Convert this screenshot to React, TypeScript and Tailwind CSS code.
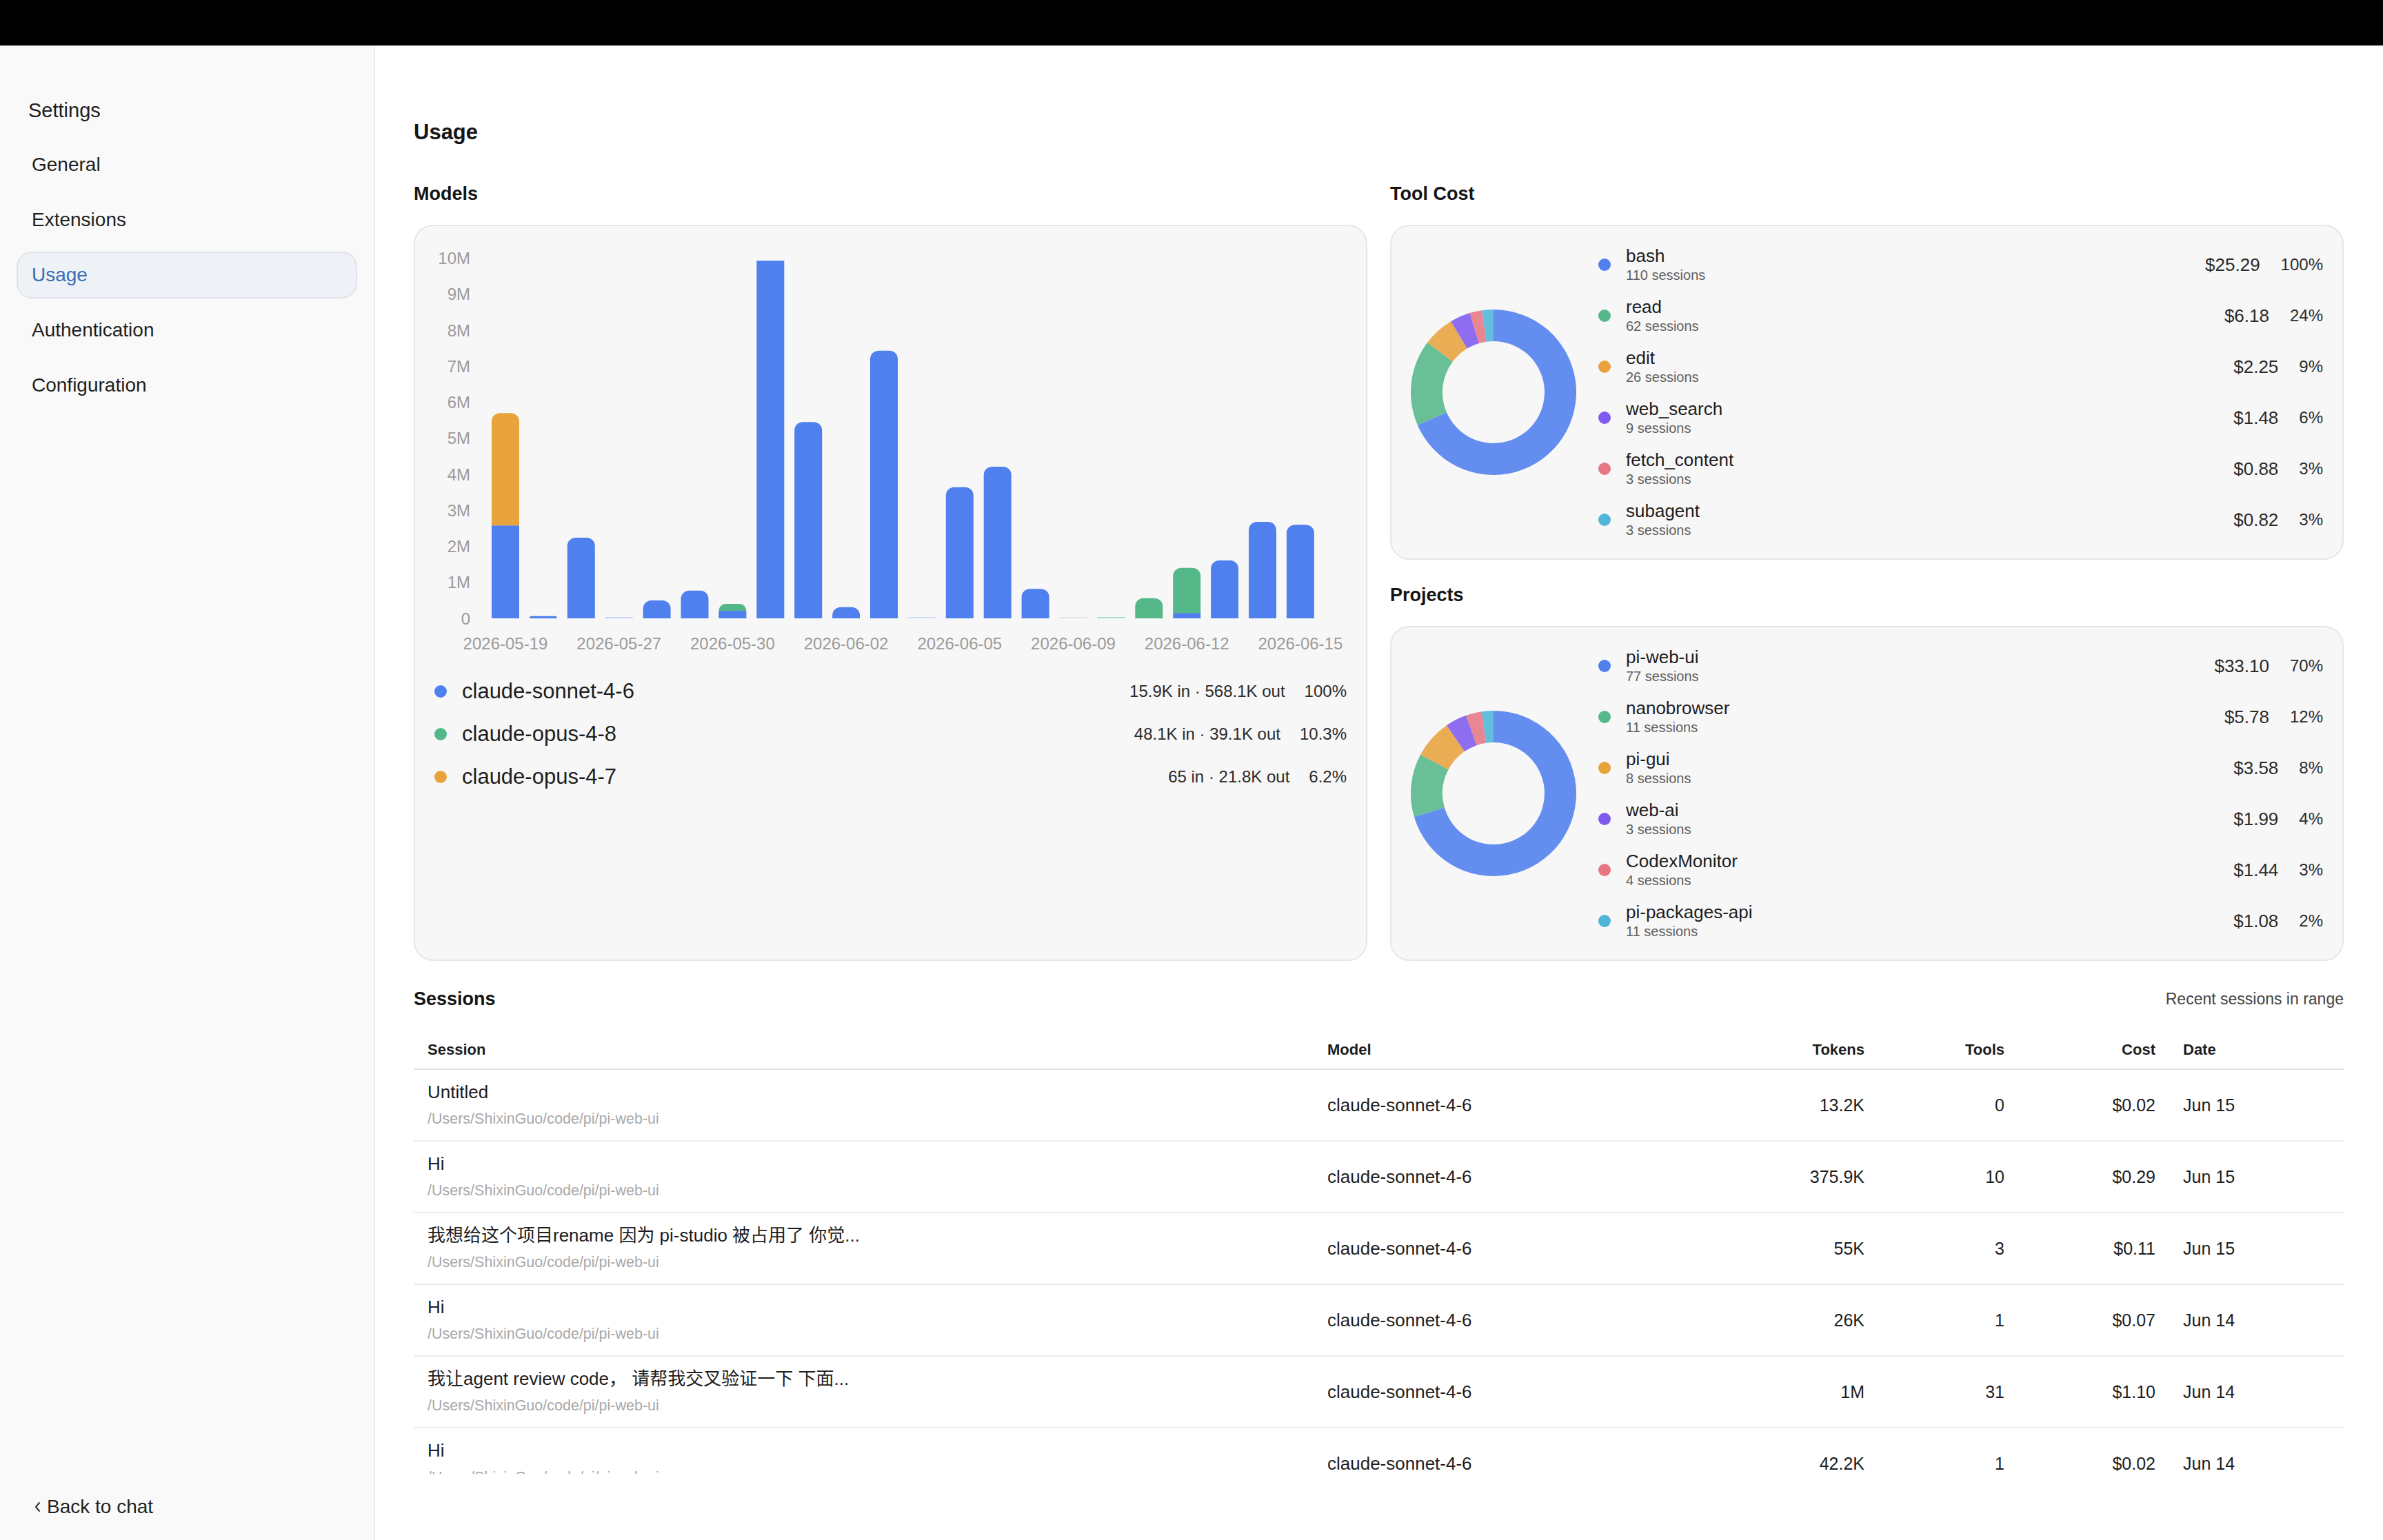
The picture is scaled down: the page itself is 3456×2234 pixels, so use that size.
import type { ReactNode } from 'react';

const BLUE = '#4f80ee';
const GREEN = '#55b889';
const ORANGE = '#e8a33c';

const navItems = ['General', 'Extensions', 'Usage', 'Authentication', 'Configuration'];

// [blue, green, orange] in millions of tokens, per day
const days: { v: [number, number, number]; flat?: boolean; faint?: string }[] = [
  { v: [2.58, 0, 3.12] },
  { v: [0.06, 0, 0] },
  { v: [2.24, 0, 0] },
  { v: [0, 0, 0], faint: '#c8d5f6' },
  { v: [0.5, 0, 0] },
  { v: [0.77, 0, 0] },
  { v: [0.21, 0.19, 0] },
  { v: [9.93, 0, 0], flat: true },
  { v: [5.45, 0, 0] },
  { v: [0.31, 0, 0] },
  { v: [7.43, 0, 0] },
  { v: [0, 0, 0], faint: '#d4dcf3' },
  { v: [3.64, 0, 0] },
  { v: [4.21, 0, 0] },
  { v: [0.82, 0, 0] },
  { v: [0, 0, 0], faint: '#e2e2e2' },
  { v: [0, 0, 0], faint: '#a8dbc1' },
  { v: [0, 0.56, 0] },
  { v: [0.15, 1.25, 0] },
  { v: [1.61, 0, 0] },
  { v: [2.68, 0, 0] },
  { v: [2.6, 0, 0] },
];

const dateLabels = ['2026-05-19', '2026-05-27', '2026-05-30', '2026-06-02', '2026-06-05', '2026-06-09', '2026-06-12', '2026-06-15'];

const models = [
  { name: 'claude-sonnet-4-6', io: '15.9K in · 568.1K out', pct: '100%', dot: 'bg-[#4f80ee]' },
  { name: 'claude-opus-4-8', io: '48.1K in · 39.1K out', pct: '10.3%', dot: 'bg-[#55b889]' },
  { name: 'claude-opus-4-7', io: '65 in · 21.8K out', pct: '6.2%', dot: 'bg-[#e8a33c]' },
];

const palette = [
  { fill: '#4f80ee', dot: 'bg-[#4f80ee]' },
  { fill: '#55b889', dot: 'bg-[#55b889]' },
  { fill: '#e8a33c', dot: 'bg-[#e8a33c]' },
  { fill: '#7f5aef', dot: 'bg-[#7f5aef]' },
  { fill: '#e67683', dot: 'bg-[#e67683]' },
  { fill: '#50b5d8', dot: 'bg-[#50b5d8]' },
];

type Slice = { name: string; sessions: string; cost: number; pct: string };

const tools: Slice[] = [
  { name: 'bash', sessions: '110 sessions', cost: 25.29, pct: '100%' },
  { name: 'read', sessions: '62 sessions', cost: 6.18, pct: '24%' },
  { name: 'edit', sessions: '26 sessions', cost: 2.25, pct: '9%' },
  { name: 'web_search', sessions: '9 sessions', cost: 1.48, pct: '6%' },
  { name: 'fetch_content', sessions: '3 sessions', cost: 0.88, pct: '3%' },
  { name: 'subagent', sessions: '3 sessions', cost: 0.82, pct: '3%' },
];

const projects: Slice[] = [
  { name: 'pi-web-ui', sessions: '77 sessions', cost: 33.1, pct: '70%' },
  { name: 'nanobrowser', sessions: '11 sessions', cost: 5.78, pct: '12%' },
  { name: 'pi-gui', sessions: '8 sessions', cost: 3.58, pct: '8%' },
  { name: 'web-ai', sessions: '3 sessions', cost: 1.99, pct: '4%' },
  { name: 'CodexMonitor', sessions: '4 sessions', cost: 1.44, pct: '3%' },
  { name: 'pi-packages-api', sessions: '11 sessions', cost: 1.08, pct: '2%' },
];

const sessions = [
  { title: 'Untitled', tokens: '13.2K', tools: '0', cost: '$0.02', date: 'Jun 15' },
  { title: 'Hi', tokens: '375.9K', tools: '10', cost: '$0.29', date: 'Jun 15' },
  { title: '我想给这个项目rename 因为 pi-studio 被占用了 你觉...', tokens: '55K', tools: '3', cost: '$0.11', date: 'Jun 15' },
  { title: 'Hi', tokens: '26K', tools: '1', cost: '$0.07', date: 'Jun 14' },
  { title: '我让agent review code， 请帮我交叉验证一下 下面...', tokens: '1M', tools: '31', cost: '$1.10', date: 'Jun 14' },
  { title: 'Hi', tokens: '42.2K', tools: '1', cost: '$0.02', date: 'Jun 14' },
];

const PATH = '/Users/ShixinGuo/code/pi/pi-web-ui';
const COLS = 'grid grid-cols-[1305px_565px_254px_203px_219px_1fr]';

function topRounded(x: number, y: number, w: number, h: number, r: number) {
  const rr = Math.min(r, h, w / 2);
  return `M${x} ${y + h} L${x} ${y + rr} A${rr} ${rr} 0 0 1 ${x + rr} ${y} L${x + w - rr} ${y} A${rr} ${rr} 0 0 1 ${x + w} ${y + rr} L${x + w} ${y + h} Z`;
}

function BarChart() {
  const base = 569;
  const perM = 52.25;
  const barW = 40;
  const left = (i: number) => 111 + i * 54.9;

  return (
    <svg width="1379" height="644" className="block">
      {Array.from({ length: 11 }).map((_, i) => (
        <text
          key={i}
          x={80}
          y={base - i * perM}
          textAnchor="end"
          dominantBaseline="central"
          fontSize="24"
          fill="#9b9b9b"
        >
          {i === 0 ? '0' : `${i}M`}
        </text>
      ))}

      {days.map((d, i) => {
        const x = left(i);
        if (d.faint) {
          return <rect key={i} x={x} y={base - 2} width={barW} height={2} fill={d.faint} />;
        }
        const segs = [
          { h: d.v[0] * perM, c: BLUE },
          { h: d.v[1] * perM, c: GREEN },
          { h: d.v[2] * perM, c: ORANGE },
        ].filter((s) => s.h > 0);
        let y = base;
        return (
          <g key={i}>
            {segs.map((s, j) => {
              y -= s.h;
              const last = j === segs.length - 1;
              if (!last || d.flat) {
                return <rect key={j} x={x} y={y} width={barW} height={s.h} fill={s.c} />;
              }
              return <path key={j} d={topRounded(x, y, barW, s.h, 12)} fill={s.c} />;
            })}
          </g>
        );
      })}

      {dateLabels.map((label, k) => (
        <text
          key={label}
          x={left(k * 3) + barW / 2}
          y={605}
          textAnchor="middle"
          dominantBaseline="central"
          fontSize="24"
          fill="#9b9b9b"
        >
          {label}
        </text>
      ))}
    </svg>
  );
}

function arc(cx: number, cy: number, r0: number, r1: number, a0: number, a1: number) {
  const p = (r: number, a: number) => {
    const rad = (a * Math.PI) / 180;
    return [cx + r * Math.sin(rad), cy - r * Math.cos(rad)];
  };
  const large = a1 - a0 > 180 ? 1 : 0;
  const [x0, y0] = p(r1, a0);
  const [x1, y1] = p(r1, a1);
  const [x2, y2] = p(r0, a1);
  const [x3, y3] = p(r0, a0);
  return `M${x0} ${y0} A${r1} ${r1} 0 ${large} 1 ${x1} ${y1} L${x2} ${y2} A${r0} ${r0} 0 ${large} 0 ${x3} ${y3} Z`;
}

function Donut({ items }: { items: Slice[] }) {
  const total = items.reduce((s, it) => s + it.cost, 0);
  let a = 0;
  return (
    <svg width="240" height="240" className="block shrink-0">
      {items.map((it, i) => {
        const a0 = a;
        a += (it.cost / total) * 360;
        return (
          <path key={it.name} d={arc(120, 120, 74, 120, a0, a)} fill={palette[i].fill} fillOpacity={0.88} />
        );
      })}
    </svg>
  );
}

function DonutCard({ items }: { items: Slice[] }) {
  return (
    <div className="flex h-[486px] items-center rounded-[28px] border-2 border-[#e6e6e6] bg-[#f7f7f7] pl-[28px] pr-[28px]">
      <Donut items={items} />
      <div className="ml-[32px] flex flex-1 flex-col">
        {items.map((it, i) => (
          <div key={it.name} className="flex h-[74px] items-center">
            <span className={`h-[18px] w-[18px] shrink-0 rounded-full ${palette[i].dot}`} />
            <div className="ml-[22px] flex flex-col">
              <span className="text-[26px] leading-[30px] text-[#1d1d1f]">{it.name}</span>
              <span className="text-[20px] leading-[26px] text-[#5f5f5f]">{it.sessions}</span>
            </div>
            <span className="ml-auto text-[26px] text-[#2b2b2b]">${it.cost.toFixed(2)}</span>
            <span className="ml-[30px] text-[24px] text-[#2b2b2b]">{it.pct}</span>
          </div>
        ))}
      </div>
    </div>
  );
}

function Heading({ children, className = '' }: { children: ReactNode; className?: string }) {
  return <h2 className={`text-[27px] font-bold leading-[34px] text-[#151515] ${className}`}>{children}</h2>;
}

function Sidebar() {
  return (
    <aside className="flex w-[544px] shrink-0 flex-col border-r-2 border-[#ececec] bg-[#f9f9f9] px-[24px] pb-[31px] pt-[76px]">
      <div className="pl-[17px] text-[29px] leading-[36px] text-[#1d1d1f]">Settings</div>
      <nav className="mt-[27px] flex flex-col gap-[12px]">
        {navItems.map((item) => {
          const active = item === 'Usage';
          return (
            <div
              key={item}
              className={
                active
                  ? 'flex h-[68px] items-center rounded-[22px] border-2 border-[#dfe3e9] bg-[#eef1f5] px-[20px] text-[28px] text-[#3a6db5]'
                  : 'flex h-[68px] items-center rounded-[22px] border-2 border-transparent px-[20px] text-[28px] text-[#1f1f1f]'
              }
            >
              {item}
            </div>
          );
        })}
      </nav>
      <div className="mt-auto flex items-center gap-[9px] pl-[25px] text-[28px] leading-[34px] text-[#1f1f1f]">
        <svg width="10" height="16" viewBox="0 0 10 16" fill="none" className="shrink-0">
          <path d="M8 2 L3 8 L8 14" stroke="#333" strokeWidth="2" strokeLinecap="round" strokeLinejoin="round" />
        </svg>
        <span>Back to chat</span>
      </div>
    </aside>
  );
}

function SessionsTable() {
  return (
    <div className="mt-[29px]">
      <div className={`${COLS} border-b-2 border-[#e3e3e3] text-[22px] font-bold leading-[26px] text-[#1d1d1f]`}>
        <div className="px-[20px] py-[14px]">Session</div>
        <div className="px-[20px] py-[14px]">Model</div>
        <div className="px-[20px] py-[14px] text-right">Tokens</div>
        <div className="px-[20px] py-[14px] text-right">Tools</div>
        <div className="px-[20px] py-[14px] text-right">Cost</div>
        <div className="px-[20px] py-[14px]">Date</div>
      </div>
      {sessions.map((s, i) => (
        <div key={i} className={`${COLS} items-center border-b-2 border-[#ececec] leading-[30px] text-[#1d1d1f]`}>
          <div className="px-[20px] pb-[18px] pt-[17px]">
            <div className="text-[26px] leading-[30px]">{s.title}</div>
            <div className="mt-[11px] text-[21.5px] leading-[26px] text-[#a8a8a8]">{PATH}</div>
          </div>
          <div className="px-[20px] text-[26px]">claude-sonnet-4-6</div>
          <div className="px-[20px] text-right text-[25px]">{s.tokens}</div>
          <div className="px-[20px] text-right text-[25px]">{s.tools}</div>
          <div className="px-[20px] text-right text-[25px]">{s.cost}</div>
          <div className="px-[20px] text-[25px]">{s.date}</div>
        </div>
      ))}
    </div>
  );
}

export default function App() {
  return (
    <div className="flex h-[2234px] w-full flex-col bg-white font-['Liberation_Sans','Noto_Sans_CJK_SC',sans-serif] text-[#1d1d1f]">
      <div className="h-[66px] shrink-0 bg-black" />
      <div className="flex min-h-0 flex-1">
        <Sidebar />
        <main className="flex min-w-0 flex-1 flex-col">
          <div className="min-h-0 flex-1 overflow-hidden pl-[56px] pr-[57px] pt-[107px]">
            <h1 className="text-[31px] font-bold leading-[38px] text-[#151515]">Usage</h1>

            <div className="mt-[53px] grid grid-cols-2 gap-x-[33px]">
              <section className="flex flex-col">
                <Heading className="mb-[28px]">Models</Heading>
                <div className="flex-1 rounded-[28px] border-2 border-[#e6e6e6] bg-[#f7f7f7]">
                  <BarChart />
                  {models.map((m) => (
                    <div key={m.name} className="flex h-[62px] items-center px-[28px]">
                      <span className={`h-[18px] w-[18px] shrink-0 rounded-full ${m.dot}`} />
                      <span className="ml-[22px] text-[31px] text-[#1d1d1f]">{m.name}</span>
                      <span className="ml-auto text-[24px] text-[#2b2b2b]">{m.io}</span>
                      <span className="ml-[28px] text-[24px] text-[#2b2b2b]">{m.pct}</span>
                    </div>
                  ))}
                </div>
              </section>

              <section className="flex flex-col">
                <Heading className="mb-[28px]">Tool Cost</Heading>
                <DonutCard items={tools} />
                <Heading className="mb-[28px] mt-[34px]">Projects</Heading>
                <DonutCard items={projects} />
              </section>
            </div>

            <section className="mt-[38px]">
              <div className="flex items-center justify-between">
                <Heading>Sessions</Heading>
                <span className="text-[23px] text-[#444]">Recent sessions in range</span>
              </div>
              <SessionsTable />
            </section>
          </div>
          <div className="h-[96px] shrink-0" />
        </main>
      </div>
    </div>
  );
}
